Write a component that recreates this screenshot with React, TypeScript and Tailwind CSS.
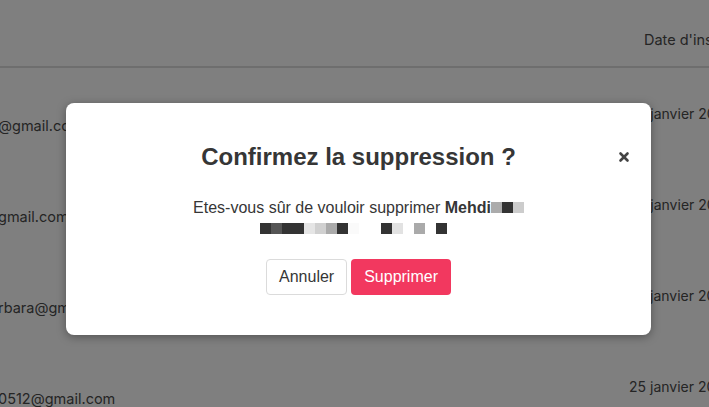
import { X } from 'lucide-react';

const rows = [
  { email: '@gmail.com', date: '24 janvier 2024' },
  { email: 'gmail.com', date: '24 janvier 2024' },
  { email: 'rbara@gmail.com', date: '25 janvier 2024' },
  { email: '0512@gmail.com', date: '25 janvier 2024' },
];

// pixelated name, one entry per 11px cell
const nameLine1 = ['#ababab', '#333333', '#cccccc'];
const nameLine2 = [
  '#333333', '#555555', '#333333', '#333333', '#e5e5e5', '#d0d0d0', '#aaaaaa', '#333333', '#fafafa',
  '#ffffff', '#ffffff', '#333333', '#e2e2e2', '#ffffff', '#aaaaaa', '#ffffff', '#333333', '#ffffff',
];

function Cell({ color }: { color: string }) {
  return <span className="inline-block w-[11px] h-[11px]" style={{ backgroundColor: color }} />;
}

export default function App() {
  return (
    <div className="relative w-[709px] h-[407px] overflow-hidden bg-white font-['Inter',sans-serif] text-[14.5px] text-[#4a4a4a]">
      {/* table behind the modal */}
      <div className="h-[68px] border-b-2 border-[#dcdcdc] flex">
        <div className="w-[644px] shrink-0" />
        <div className="pt-[29px] leading-[22px] whitespace-nowrap shrink-0">Date d'inscription</div>
      </div>
      {rows.map((r, i) => (
        <div key={i} className="h-[91px] flex">
          <div className="w-[631px] shrink-0 pt-[47px] leading-[22px] whitespace-nowrap -ml-[2px]">{r.email}</div>
          <div className="pt-[35px] leading-[22px] whitespace-nowrap shrink-0 text-[14px]">{r.date}</div>
        </div>
      ))}

      {/* overlay + modal */}
      <div className="absolute inset-0 bg-black/50 pl-[66px] pt-[103px]">
        <div className="relative w-[585px] h-[232px] bg-white rounded-lg shadow-[0_2px_10px_rgba(0,0,0,0.35)] pt-[40px] font-['Liberation_Sans',Arial,sans-serif] text-center">
          <h2 className="text-[24px] leading-[27px] font-bold text-[#363636]">Confirmez la suppression ?</h2>
          <button className="absolute top-[47px] right-[20px] text-[#444]">
            <X size={14} strokeWidth={4.5} />
          </button>
          <div className="mt-[27px] text-[16px] leading-[21px] text-[#363636]">
            <div className="flex items-center justify-center">
              <span>Etes-vous sûr de vouloir supprimer&nbsp;</span>
              <strong className="font-bold">Mehdi</strong>
              <span className="flex">
                {nameLine1.map((c, i) => (
                  <Cell key={i} color={c} />
                ))}
              </span>
            </div>
            <div className="flex items-center justify-center h-[21px]">
              {nameLine2.map((c, i) => (
                <Cell key={i} color={c} />
              ))}
            </div>
          </div>
          <div className="mt-[20px] flex justify-center gap-[4px]">
            <button className="h-[36px] px-3 border border-[#dbdbdb] rounded text-[16px] text-[#363636] bg-white">
              Annuler
            </button>
            <button className="h-[36px] px-3 border border-transparent rounded text-[16px] text-white bg-[#f2385f]">
              Supprimer
            </button>
          </div>
        </div>
      </div>
    </div>
  );
}
